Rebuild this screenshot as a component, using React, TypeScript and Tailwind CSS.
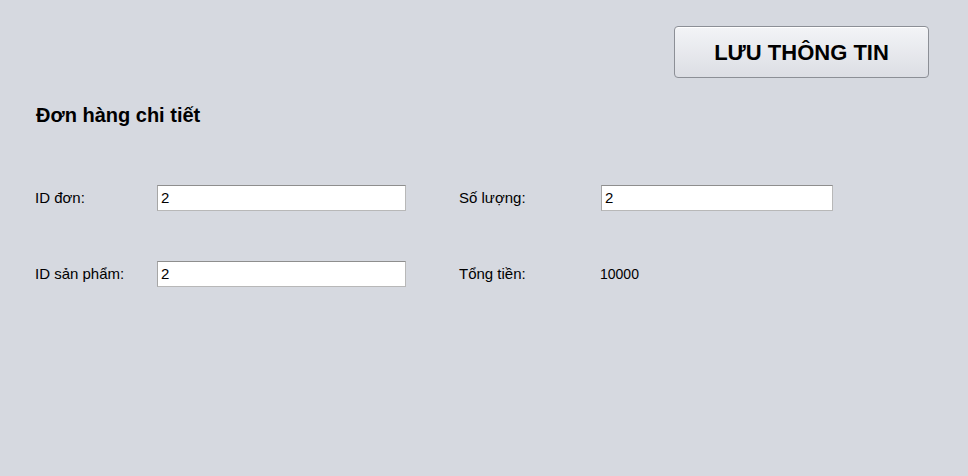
import React from "react";

function Field({ value, width }: { value: string; width: string }) {
  return (
    <div
      className={`${width} h-[26px] bg-white border border-[#b8b8b8] border-t-[#8e8e8e] border-l-[#a6a6a6] flex items-center pl-[3px] text-[15px] text-black`}
    >
      {value}
    </div>
  );
}

export default function App() {
  return (
    <div
      className="w-[968px] h-[476px] bg-[#d6d9e0] text-black flex flex-col"
      style={{ fontFamily: '"Liberation Sans", Arial, sans-serif' }}
    >
      <div className="flex justify-end pt-[26px] pr-[39px]">
        <button className="w-[255px] h-[52px] rounded-[4px] border border-[#8c8f96] bg-gradient-to-b from-[#f3f4f7] to-[#dcdee4] text-[22px] font-bold text-black shadow-[inset_0_1px_0_#ffffff]">
          LƯU THÔNG TIN
        </button>
      </div>
      <div className="pl-[36px] pt-[25px] text-[20px] font-bold leading-[24px]">
        Đơn hàng chi tiết
      </div>
      <div className="flex pl-[35px] pt-[58px]">
        <div className="flex flex-col gap-[50px]">
          <div className="flex items-center h-[26px]">
            <div className="w-[122px] text-[15px]">ID đơn:</div>
            <Field value="2" width="w-[249px]" />
          </div>
          <div className="flex items-center h-[26px]">
            <div className="w-[122px] text-[15px]">ID sản phẩm:</div>
            <Field value="2" width="w-[249px]" />
          </div>
        </div>
        <div className="flex flex-col gap-[50px] pl-[53px]">
          <div className="flex items-center h-[26px]">
            <div className="w-[142px] text-[15px]">Số lượng:</div>
            <Field value="2" width="w-[232px]" />
          </div>
          <div className="flex items-center h-[26px]">
            <div className="w-[141px] text-[15px]">Tổng tiền:</div>
            <div className="text-[14px]">10000</div>
          </div>
        </div>
      </div>
    </div>
  );
}
